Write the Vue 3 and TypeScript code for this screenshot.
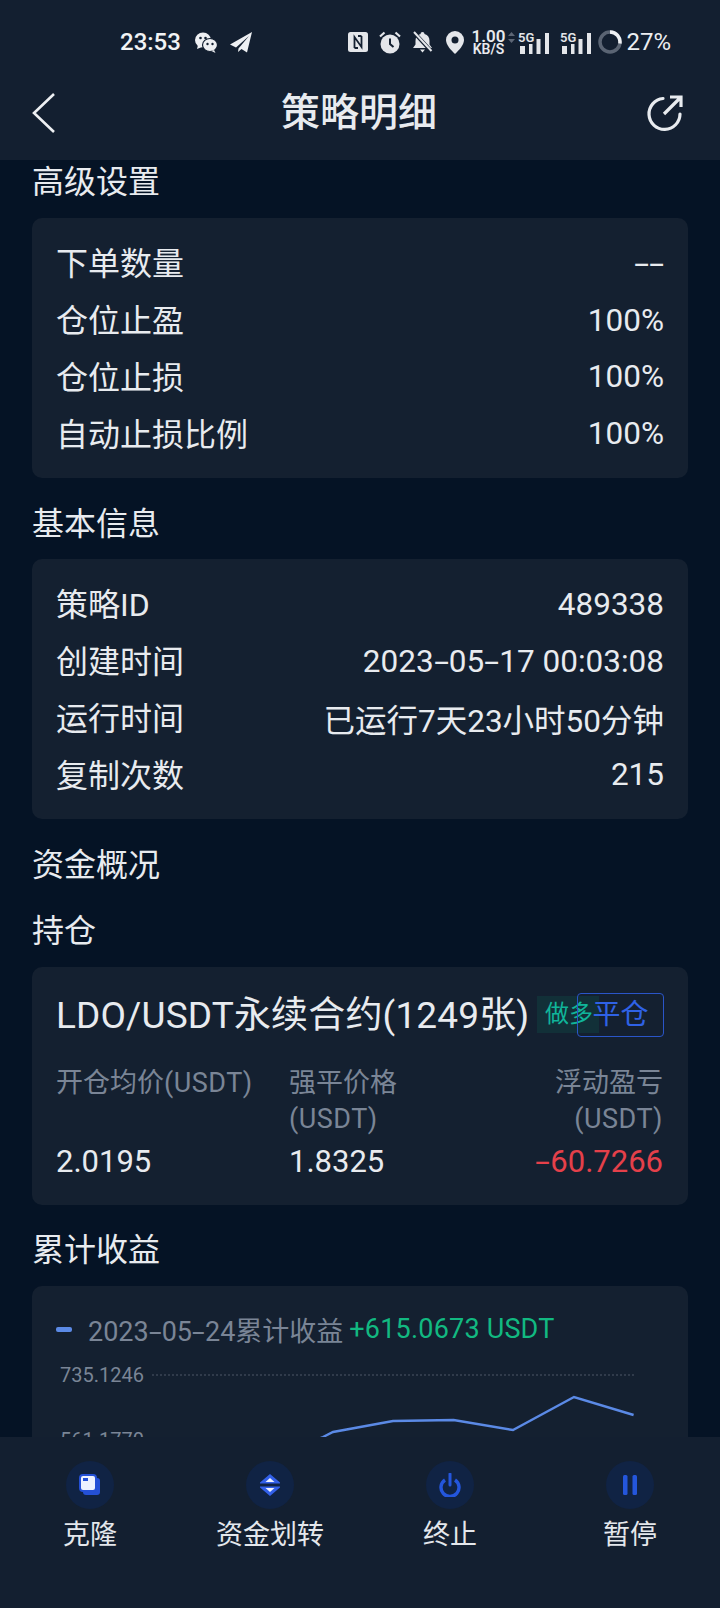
<script setup lang="ts">
interface Row { label: string; value: string }
const advanced: Row[] = [
  { label: '下单数量', value: '--' },
  { label: '仓位止盈', value: '100%' },
  { label: '仓位止损', value: '100%' },
  { label: '自动止损比例', value: '100%' },
]
const basic: Row[] = [
  { label: '策略ID', value: '489338' },
  { label: '创建时间', value: '2023-05-17 00:03:08' },
  { label: '运行时间', value: '已运行7天23小时50分钟' },
  { label: '复制次数', value: '215' },
]
const linePoints = '300,1447 323,1437 333,1432 393,1421 453.6,1420 513,1430 574,1397 633.6,1415'

// The reference's font has long hyphens, so each hyphen gets its own span.
function pieces(text: string): string[] {
  return text.split(/(-)/).filter((p) => p !== '')
}
</script>

<template>
  <div class="page">
    <header class="top">
      <div class="status">
        <span class="time">23:53</span>
        <svg class="ic wechat" width="24" height="22" viewBox="0 0 24 22">
          <ellipse cx="9" cy="9" rx="8" ry="7.5" fill="#eef0f3" />
          <path d="M4 14l-1 4 5-2z" fill="#eef0f3" />
          <ellipse cx="16" cy="14" rx="7.5" ry="6.5" fill="#eef0f3" stroke="#131f30" stroke-width="1.2" />
          <path d="M20 19l1.500 3-4-2z" fill="#eef0f3" />
          <circle cx="6.500" cy="7" r="1.300" fill="#131f30" />
          <circle cx="11.500" cy="7" r="1.300" fill="#131f30" />
          <circle cx="13.500" cy="13" r="1.200" fill="#131f30" />
          <circle cx="18.500" cy="13" r="1.200" fill="#131f30" />
        </svg>
        <svg class="ic plane" width="22" height="21" viewBox="0 0 22 21">
          <path d="M22 0 0 12.500l6 3L19 4 8.500 16.500 8 20l3.500-3 5.500 3.500z" fill="#eef0f3" />
        </svg>
        <div class="status-right">
          <svg width="20" height="20" viewBox="0 0 20 20" class="r-nfc">
            <rect width="20" height="20" rx="2.500" fill="#e4e6ea" />
            <path d="M6.500 16V5l7 10V4" fill="none" stroke="#131f30" stroke-width="1.800" />
            <path d="M10 4h3.500M6.500 16H10" fill="none" stroke="#131f30" stroke-width="1.800" />
          </svg>
          <svg width="22" height="23" viewBox="0 0 22 23" class="r-alarm">
            <circle cx="11" cy="13" r="9.500" fill="#e4e6ea" />
            <path d="M11 7.500V13l3.500 3" fill="none" stroke="#131f30" stroke-width="2" />
            <path d="M1 5.500 5.500 1.500M21 5.500 16.500 1.500" stroke="#e4e6ea" stroke-width="2.200" />
          </svg>
          <svg width="21" height="22" viewBox="0 0 21 22" class="r-bell">
            <path d="M10.500 1a2 2 0 0 1 2 2c3.500 1 5 3.500 5 7v3.500l2.500 3.500H1l2.500-3.500V10c0-3.500 1.500-6 5-7a2 2 0 0 1 2-2z" fill="#e4e6ea" />
            <path d="M8 18.500h5l-2.500 3z" fill="#e4e6ea" />
            <path d="M2 1.500 19 20" stroke="#131f30" stroke-width="4" />
            <path d="M2 1 19.500 20" stroke="#e4e6ea" stroke-width="2" />
          </svg>
          <svg width="18" height="23" viewBox="0 0 18 23" class="r-pin">
            <path d="M9 0a9 9 0 0 1 9 9c0 5-5 10-9 14C5 19 0 14 0 9a9 9 0 0 1 9-9z" fill="#e4e6ea" />
            <circle cx="9" cy="9" r="3.500" fill="#131f30" />
          </svg>
          <div class="speed"><span>1.00</span><span>KB/S</span></div>
          <svg width="7" height="11" viewBox="0 0 7 11" class="r-arrows">
            <path d="M3.500 0 7 4H0zM3.500 11 0 7h7z" fill="#5d6675" />
          </svg>
          <svg width="31" height="23" viewBox="0 0 31 23" class="r-sig">
            <text x="0" y="11" class="g5">5G</text>
            <path d="M2 15h5v8H2zM11 13h3.500v10H11zM18.500 8h4v15h-4zM27 2h4v21h-4z" fill="#e4e6ea" />
          </svg>
          <svg width="31" height="23" viewBox="0 0 31 23" class="r-sig2">
            <text x="0" y="11" class="g5">5G</text>
            <path d="M2 15h5v8H2zM11 13h3.500v10H11zM18.500 8h4v15h-4zM27 2h4v21h-4z" fill="#e4e6ea" />
          </svg>
          <svg width="24" height="24" viewBox="0 0 24 24" class="r-ring">
            <circle cx="12" cy="12" r="10" fill="none" stroke="#5a6473" stroke-width="3.500" />
            <path d="M12 2a10 10 0 0 1 9.900 11.400" fill="none" stroke="#eef0f3" stroke-width="3.500" />
          </svg>
          <span class="pct">27%</span>
        </div>
      </div>
      <div class="nav">
        <svg class="back" width="24" height="42" viewBox="0 0 24 42">
          <path d="M22 2 2 21l20 19" fill="none" stroke="#eef0f3" stroke-width="2.600" />
        </svg>
        <h1 class="nav-title">策略明细</h1>
        <svg class="share" width="38" height="38" viewBox="0 0 38 38">
          <path d="M17 4.500a15.500 15.500 0 1 0 17 15.500" fill="none" stroke="#e8ebef" stroke-width="3.200" stroke-linecap="round" />
          <path d="M18 20 34 4M24 3h11v10" fill="none" stroke="#e8ebef" stroke-width="3.200" />
        </svg>
      </div>
    </header>

    <main class="main">
      <h2 class="sec first">高级设置</h2>
      <section class="card rows">
        <div v-for="r in advanced" :key="r.label" class="row">
          <span class="row-label">{{ r.label }}</span>
          <span class="row-value"><template v-for="(p, i) in pieces(r.value)" :key="i"><span v-if="p === '-'" class="hy">-</span><template v-else>{{ p }}</template></template></span>
        </div>
      </section>

      <h2 class="sec">基本信息</h2>
      <section class="card rows">
        <div v-for="r in basic" :key="r.label" class="row">
          <span class="row-label">{{ r.label }}</span>
          <span class="row-value"><template v-for="(p, i) in pieces(r.value)" :key="i"><span v-if="p === '-'" class="hy">-</span><template v-else>{{ p }}</template></template></span>
        </div>
      </section>

      <h2 class="sec">资金概况</h2>
      <h2 class="sec tight">持仓</h2>
      <section class="card pos">
        <div class="pos-head">
          <span class="pos-title">LDO/USDT永续合约(1249张)</span>
          <span class="tag">做多</span>
          <span class="close-btn">平仓</span>
        </div>
        <div class="pos-grid">
          <span class="lbl">开仓均价<span class="unit">(USDT)</span></span>
          <span class="lbl">强平价格<span class="unit">(USDT)</span></span>
          <span class="lbl end">浮动盈亏<span class="unit">(USDT)</span></span>
          <span class="val">2.0195</span>
          <span class="val">1.8325</span>
          <span class="val end red"><span class="hy">-</span>60.7266</span>
        </div>
      </section>

      <h2 class="sec last">累计收益</h2>
      <section class="card chart">
        <div class="legend">
          <i class="dash"></i>
          <span class="legend-text"><template v-for="(p, i) in pieces('2023-05-24')" :key="i"><span v-if="p === '-'" class="hy">-</span><template v-else>{{ p }}</template></template>累计收益</span>
          <span class="legend-num">+615.0673 USDT</span>
        </div>
        <svg class="plot" width="656" height="200" viewBox="32 1352 656 200">
          <text x="60" y="1382" class="axis">735.1246</text>
          <line x1="152" y1="1375" x2="634" y2="1375" stroke="#4c5766" stroke-width="1" stroke-dasharray="2 2" />
          <text x="60" y="1447" class="axis">561.1770</text>
          <polyline :points="linePoints" fill="none" stroke="#5b8ae6" stroke-width="2.400" />
        </svg>
      </section>
    </main>

    <footer class="bar">
      <div class="act">
        <span class="disc">
          <svg width="22" height="22" viewBox="0 0 22 22">
            <rect x="4" y="4" width="17" height="17" rx="3" fill="#2450d6" />
            <rect x="1" y="1" width="16" height="16" rx="3" fill="#eef2ff" stroke="#2450d6" stroke-width="2" />
            <rect x="4" y="4" width="5" height="3" fill="#2450d6" />
          </svg>
        </span>
        <span class="act-label">克隆</span>
      </div>
      <div class="act">
        <span class="disc">
          <svg width="24" height="24" viewBox="0 0 24 24">
            <path d="M12 1 22 9.500v1H2v-1zM2 13.500h20v1L12 23 2 14.500z" fill="#3360e8" />
            <path d="M12 5 16.500 9h-9zM7.500 15h9L12 19z" fill="#eef2ff" />
          </svg>
        </span>
        <span class="act-label">资金划转</span>
      </div>
      <div class="act">
        <span class="disc">
          <svg width="22" height="24" viewBox="0 0 22 24">
            <path d="M6 7a9 9 0 1 0 10 0" fill="none" stroke="#2456dc" stroke-width="3.400" />
            <path d="M11 1v11" stroke="#2456dc" stroke-width="3" stroke-linecap="round" />
          </svg>
        </span>
        <span class="act-label">终止</span>
      </div>
      <div class="act">
        <span class="disc">
          <svg width="16" height="20" viewBox="0 0 16 20">
            <rect x="1" width="4.500" height="20" rx="1.500" fill="#2456dc" />
            <rect x="10.500" width="4.500" height="20" rx="1.500" fill="#2456dc" />
          </svg>
        </span>
        <span class="act-label">暂停</span>
      </div>
    </footer>
  </div>
</template>

<style>
html, body { margin: 0; background: #051325; }
</style>

<style scoped>
.page {
  width: 720px;
  height: 1608px;
  display: flex;
  flex-direction: column;
  overflow: hidden;
  background: #051325;
  color: #e8ebef;
  font-family: Roboto, "Noto Sans CJK SC", sans-serif;
}
.top { height: 160px; flex: none; background: #131f30; }
.status { height: 84px; display: flex; align-items: center; padding: 0 49px 0 120px; }
.time { font-size: 24px; font-weight: 500; color: #f2f3f5; }
.wechat { margin-left: 13px; }
.plane { margin-left: 12px; }
.status-right { margin-left: auto; display: flex; align-items: center; }
.r-alarm { margin-left: 11px; }
.r-bell { margin-left: 11px; }
.r-pin { margin-left: 13px; }
.speed { margin-left: 7px; display: flex; flex-direction: column; align-items: center; font-size: 14px; line-height: 12px; font-weight: 600; color: #e8eaee; }
.speed span:first-child { font-size: 17px; line-height: 13px; }
.r-arrows { margin-left: 3px; margin-top: -10px; }
.r-sig { margin-left: 3px; }
.r-sig2 { margin-left: 11px; }
.r-ring { margin-left: 7px; }
.pct { margin-left: 4px; font-size: 24px; color: #eceef1; }
.g5 { font: 600 13px Roboto, sans-serif; fill: #e4e6ea; }
.nav { height: 58px; display: flex; align-items: center; justify-content: space-between; padding: 0 36px 0 32px; position: relative; }
.nav-title { margin: 0; font-size: 39px; font-weight: 500; line-height: 58px; color: #e8ebef; position: absolute; left: -2px; right: 0; text-align: center; }
.main { flex: 1; min-height: 0; overflow: hidden; padding: 0 32px; }
.sec { margin: 24px 0 13px; height: 44px; font-size: 32px; line-height: 44px; font-weight: 400; color: #e8ebef; }
.sec.first { margin: 0 0 14px; }
.sec.tight { margin: 22px 0 14px; }
.sec.last { margin: 23px 0 14px; }
.card { background: #142030; border-radius: 10px; }
.rows { padding: 17px 24px 16px; height: 260px; box-sizing: border-box; }
.row { display: flex; justify-content: space-between; align-items: center; height: 56.8px; font-size: 32px; color: #e8ebef; }
.row-label { padding-bottom: 4px; }
.row-value { font-size: 31.5px; white-space: nowrap; }
.hy { display: inline-block; width: 0.48em; text-align: center; transform: scaleX(1.7); }
.pos { padding: 25px 24px 20px; }
.pos-head { height: 44px; display: flex; align-items: center; }
.pos-title { padding-bottom: 4px; font-size: 37px; letter-spacing: 0.15px; white-space: nowrap; color: #e8ebef; }
.tag { margin-left: auto; flex: none; width: 62px; height: 37px; box-sizing: border-box; padding-left: 8px; background: #123038; color: #10b59a; font-size: 24px; line-height: 37px; white-space: nowrap; }
.close-btn { flex: none; width: 87px; height: 44px; margin: 2px 0 0 -22px; box-sizing: border-box; border: 1px solid #2a55c8; border-radius: 4px; color: #2f62e6; font-size: 28px; line-height: 42px; text-align: center; }
.pos-grid { margin-top: 29px; display: grid; grid-template-columns: 233px 187px 187px; row-gap: 2px; }
.lbl { font-size: 27px; line-height: 36px; color: #7a8596; }
.unit { letter-spacing: 0.5px; }
.val { font-size: 31px; line-height: 46px; color: #e8ebef; }
.end { text-align: right; }
.red { color: #e5404a; }
.chart { height: 300px; padding-top: 25px; box-sizing: border-box; }
.legend { height: 36px; display: flex; align-items: center; padding-left: 24px; white-space: nowrap; }
.dash { width: 16px; height: 5px; border-radius: 2px; background: #5b8ae6; }
.legend-text { margin-left: 16px; font-size: 27px; color: #7a8596; }
.legend-num { margin-left: 6px; font-size: 27px; letter-spacing: 0.2px; color: #12b981; }
.plot { display: block; margin-top: 5px; }
.axis { font: 20px Roboto, sans-serif; fill: #7a8596; }
.bar { height: 171px; flex: none; background: #131f30; display: grid; grid-template-columns: repeat(4, 180px); padding-top: 24px; box-sizing: border-box; position: relative; }
.act { display: flex; flex-direction: column; align-items: center; }
.disc { width: 48px; height: 48px; border-radius: 50%; background: #102344; display: flex; align-items: center; justify-content: center; }
.act-label { margin-top: 6px; font-size: 27px; line-height: 40px; color: #e4e7ec; }
</style>
